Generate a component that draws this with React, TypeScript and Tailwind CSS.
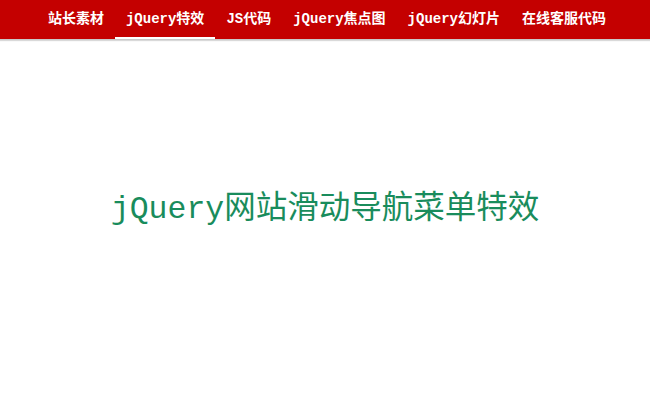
import React from 'react';

const navItems = ['站长素材', 'jQuery特效', 'JS代码', 'jQuery焦点图', 'jQuery幻灯片', '在线客服代码'];

const App: React.FC = () => {
  const active = 1;

  return (
    <div className="min-h-[411px] bg-white" style={{ fontFamily: '"Liberation Mono", "Noto Sans CJK SC", monospace' }}>
      <div className="h-[39px] bg-[#c40000] border-b border-[#c9c9c9] shadow-[0_1px_1px_rgba(0,0,0,0.15)] box-content">
        <ul className="flex justify-center h-full pl-[4px]">
          {navItems.map((item, i) => (
            <li
              key={item}
              className={`flex items-center h-full px-[11px] text-[14px] font-bold text-white border-b-[2px] ${
                i === active ? 'border-white' : 'border-transparent'
              }`}
            >
              <span className="pt-[2px]">{item}</span>
            </li>
          ))}
        </ul>
      </div>
      <h1 className="mt-[150px] text-center text-[31.5px] leading-[40px] font-normal text-[#198c5c]">
        jQuery网站滑动导航菜单特效
      </h1>
    </div>
  );
};

export default App;
